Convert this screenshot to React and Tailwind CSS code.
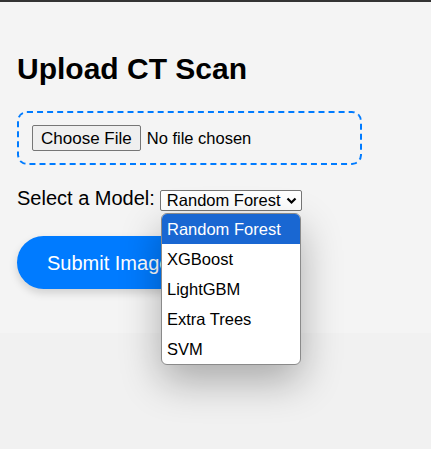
export default function App() {
  const items = ["Random Forest", "XGBoost", "LightGBM", "Extra Trees", "SVM"];
  return (
    <div className="relative min-h-[449px] w-full bg-[#f1f1f1] font-['Liberation_Sans',Arial,sans-serif] text-black">
      <div className="h-[2px] bg-[#333333]" />
      <div className="bg-[#f4f4f4] px-[17px] pt-[50px] pb-[44px]">
        <h1 className="text-[30px] font-bold leading-[34px]">Upload CT Scan</h1>
        <div className="mt-[25px] flex h-[54px] w-[345px] items-center rounded-[10px] border-2 border-dashed border-[#007bff] px-[13px]">
          <div className="flex h-[26px] items-center rounded-[2px] border border-[#767676] bg-[#efefef] px-[8px] text-[17px] leading-none">
            Choose File
          </div>
          <span className="ml-[6px] text-[16.5px] leading-none">No file chosen</span>
        </div>
        <div className="mt-[21px] flex items-start">
          <span className="text-[20px] leading-[24px]">Select a Model:</span>
          <div className="ml-[5px] mt-[4px] flex h-[21px] w-[142px] items-center justify-between rounded-[2px] border border-[#767676] bg-white pl-[6px] pr-[4px] text-[16.5px] leading-none">
            <span>Random Forest</span>
            <svg width="11" height="8" viewBox="0 0 11 8" className="mt-[1px]">
              <path d="M1.5 1.5 L5.5 5.5 L9.5 1.5" fill="none" stroke="#000" strokeWidth="2.2" />
            </svg>
          </div>
        </div>
        <button className="mt-[25px] h-[53px] rounded-full bg-[#007bff] px-[30px] text-[20px] text-white shadow-[0_4px_8px_rgba(0,0,0,0.15)]">
          Submit Image
        </button>
      </div>
      <div className="absolute left-[161px] top-[213px] w-[140px] overflow-hidden rounded-[6px] border border-[#8a8a8a] bg-white shadow-[0_16px_40px_rgba(0,0,0,0.3)]">
        {items.map((it, i) => (
          <div
            key={it}
            className={
              i === 0
                ? "flex h-[30px] items-center bg-[#1967d2] pl-[5px] text-[16.5px] text-white"
                : "flex h-[30px] items-center pl-[5px] text-[16.5px] text-black"
            }
          >
            {it}
          </div>
        ))}
      </div>
    </div>
  );
}
